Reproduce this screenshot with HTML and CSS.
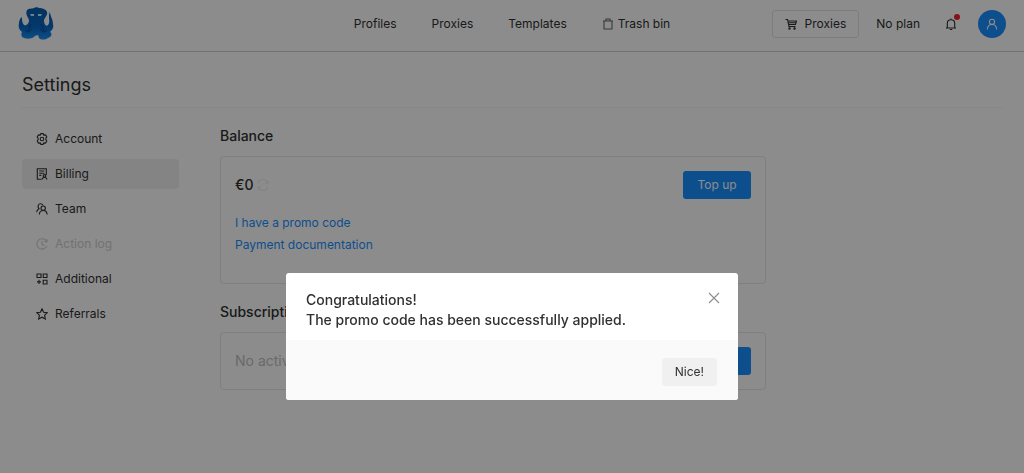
FILE: index.html
```html
<!DOCTYPE html>
<html lang="en">
<head>
    <meta charset="UTF-8">
    <meta name="viewport" content="width=device-width, initial-scale=1.0">
    <title>Settings - Billing</title>
    <link rel="stylesheet" href="styles.css">
</head>
<body>
    <header class="header">
        <a class="logo" href="#" aria-label="Home">
            <svg width="36" height="34" viewBox="0 0 36 34">
                <defs>
                    <linearGradient id="ink" x1="0" y1="0" x2="0" y2="1">
                        <stop offset="0" stop-color="#065cae"/>
                        <stop offset="0.6" stop-color="#0868c4"/>
                        <stop offset="1" stop-color="#1a90f5"/>
                    </linearGradient>
                </defs>
                <path fill="url(#ink)" d="M9 3C11 1 14 2 16 1C17 0 20 0 21 1C24 1 28 2 29 5C30 8 27 10 26 13C26 17 28 20 30 18C32 16 31 13 31 10C31 8 31 6 32 5C32 9 35 12 35 17C36 21 34 23 32 25C35 27 33 30 30 31C27 33 23 33 21 31L20 28C18 29 17 28 16 30C13 32 9 32 6 31C3 30 3 27 4 25C1 23 0 20 1 16C1 14 2 11 4 10C4 13 4 16 6 18C9 19 11 16 11 13C10 10 7 7 9 3Z"/>
                <path stroke="#054a92" stroke-width="1" fill="none" d="M13 17L10 24M23 17L26 24M7 23C9 26 12 25 14 22M29 23C27 26 24 25 22 22"/>
                <path fill="#c4ecff" d="M12 7H16V9H13ZM20 7H24L23 9H20Z"/>
            </svg>
        </a>
        <nav class="nav">
            <a href="#">Profiles</a>
            <a href="#">Proxies</a>
            <a href="#">Templates</a>
            <a href="#">
                <svg class="icon trash" viewBox="0 0 12 12"><path d="M1 3H11M4 3V1H8V3M2 3V11H10V3"/></svg>
                Trash bin
            </a>
        </nav>
        <div class="tools">
            <button class="btn btn-outline">
                <svg class="icon" viewBox="0 0 12 12"><path d="M0.5 1.5H2.5L4 8.5H10.5M3 3H11.5L10.5 6.5H3.6M3.2 4.7H11"/><circle cx="4.5" cy="10.5" r="0.7"/><circle cx="9.5" cy="10.5" r="0.7"/></svg>
                Proxies
            </button>
            <span class="plan">No plan</span>
            <button class="bell" aria-label="Notifications">
                <svg class="icon" viewBox="0 0 12 12"><path d="M1 10H11M2.3 10V5.3C2.3 3 4 1.7 6 1.7S9.7 3 9.7 5.3V10M6 1.7V0.5M4.8 11.5H7.2"/></svg>
                <span class="dot"></span>
            </button>
            <button class="avatar" aria-label="User menu">
                <svg class="icon" viewBox="0 0 12 12"><circle cx="6" cy="3.8" r="2.6"/><path d="M1.3 11.5C1.5 8.5 3.2 6.5 6 6.5S10.5 8.5 10.7 11.5"/></svg>
            </button>
        </div>
    </header>

    <main class="page">
        <h1>Settings</h1>
        <div class="columns">
            <nav class="side">
                <a href="#">
                    <svg class="icon" viewBox="0 0 12 12"><path d="M4.8 0.6H7.2L7.8 2.1L9.5 1.9L10.8 4L9.9 5.2V6.8L10.8 8L9.5 10.1L7.8 9.9L7.2 11.4H4.8L4.2 9.9L2.5 10.1L1.2 8L2.1 6.8V5.2L1.2 4L2.5 1.9L4.2 2.1Z"/><circle cx="6" cy="6" r="1.8"/></svg>
                    Account
                </a>
                <a href="#" class="active">
                    <svg class="icon" viewBox="0 0 12 12"><path d="M5.5 11.3H1.3V0.7H10.3V7M3.3 3H8.3M3.3 5.2H8.3M3.3 7.4H5.3M6.2 11.5C6.4 10 7.2 9.3 8.5 9.3S10.6 10 11 11.5"/><circle cx="8.5" cy="7.9" r="1.3"/></svg>
                    Billing
                </a>
                <a href="#">
                    <svg class="icon" viewBox="0 0 12 12"><path d="M3.3 11.5C3.5 8.8 5 7.5 7.2 7.5S10.9 8.8 11.2 11.5M0.7 9.3C0.8 7.6 1.6 6.3 3 5.7C1.2 4 2 0.8 4.6 0.8C5.8 0.8 6.5 1.3 7 2.2"/><circle cx="7.2" cy="5.2" r="2.2"/></svg>
                    Team
                </a>
                <a href="#" class="disabled" aria-disabled="true">
                    <svg class="icon" viewBox="0 0 12 12"><path d="M10.5 3.2A5.2 5.2 0 1 0 10.8 8M11 1.2V3.8H8.4M6 3V6.3L8.2 7.5"/></svg>
                    Action log
                </a>
                <a href="#">
                    <svg class="icon" viewBox="0 0 12 12"><path d="M1 1H5V4.5H1ZM7.2 1H11V4.5H7.2ZM7.2 7.2H11V11H7.2ZM3 6.8V11M1 8.9H5"/></svg>
                    Additional
                </a>
                <a href="#">
                    <svg class="icon" viewBox="0 0 12 12"><path d="M6 0.8L7.6 4.2L11.3 4.7L8.6 7.2L9.3 11L6 9.2L2.7 11L3.4 7.2L0.7 4.7L4.4 4.2Z"/></svg>
                    Referrals
                </a>
            </nav>

            <div class="content">
                <section>
                    <h2>Balance</h2>
                    <div class="card balance">
                        <div>
                            <p class="amount">€0 <svg class="icon" viewBox="0 0 12 12"><path d="M1 4A5 5 0 0 1 10.5 4M11 1V4.2H8M11 8A5 5 0 0 1 1.5 8M1 11V7.8H4"/></svg></p>
                            <a href="#">I have a promo code</a>
                            <a href="#">Payment documentation</a>
                        </div>
                        <button class="btn btn-primary">Top up</button>
                    </div>
                </section>
                <section>
                    <h2>Subscription</h2>
                    <div class="card">
                        <p class="empty">No active plan</p>
                        <button class="btn btn-primary" aria-label="Choose a plan"></button>
                    </div>
                </section>
            </div>
        </div>
    </main>

    <div class="overlay">
        <div class="modal" role="dialog" aria-modal="true" aria-labelledby="modal-text">
            <div class="modal-body">
                <p id="modal-text">Congratulations!<br>The promo code has been successfully applied.</p>
                <button class="close" aria-label="Close">
                    <svg class="icon" viewBox="0 0 12 12"><path d="M1 1L11 11M11 1L1 11"/></svg>
                </button>
            </div>
            <div class="modal-footer">
                <button class="btn btn-grey">Nice!</button>
            </div>
        </div>
    </div>
</body>
</html>
```
FILE: styles.css
```css
* {
    box-sizing: border-box;
}
body {
    margin: 0;
    background: #fff;
    color: #303030;
    font: 12px/20px Inter, "Liberation Sans", sans-serif;
}
h1, h2, p {
    margin: 0;
    font-weight: 500;
}
a {
    color: inherit;
    text-decoration: none;
}
button {
    font: inherit;
    color: inherit;
    cursor: pointer;
}
.icon {
    width: 12px;
    height: 12px;
    flex: none;
    fill: none;
    stroke: currentColor;
    stroke-width: 1.1;
}

/* header */
.header {
    display: grid;
    grid-template-columns: 1fr auto 1fr;
    align-items: center;
    height: 52px;
    padding: 0 18px 3px;
    border-bottom: 1px solid #d0d0d0;
}
.logo {
    display: flex;
}
.nav {
    display: flex;
    gap: 35px;
}
.nav a {
    display: flex;
    align-items: center;
    gap: 4px;
}
.trash {
    color: #666;
}
.tools {
    display: flex;
    align-items: center;
    justify-content: flex-end;
}
.btn {
    display: flex;
    align-items: center;
    justify-content: center;
    height: 28px;
    padding: 0 12px;
    border: 1px solid transparent;
    border-radius: 3px;
}
.btn-outline {
    gap: 8px;
    background: #fff;
    border-color: #e4e4e4;
}
.btn-primary {
    background: #1890ff;
    color: #fff;
    min-width: 68px;
}
.btn-grey {
    background: #f0f0f0;
}
.plan {
    margin: 0 24px 0 17px;
}
.bell {
    position: relative;
    display: flex;
    padding: 1px;
    border: 0;
    background: none;
    margin-right: 20px;
}
.dot {
    position: absolute;
    top: -3px;
    right: -2px;
    width: 6px;
    height: 6px;
    border-radius: 50%;
    background: #f5222d;
}
.avatar {
    display: flex;
    align-items: center;
    justify-content: center;
    width: 28px;
    height: 28px;
    padding: 0;
    border: 0;
    border-radius: 50%;
    background: #1890ff;
    color: #fff;
}

/* settings page */
.page {
    padding: 20px 22px;
}
h1 {
    padding-bottom: 9px;
    margin-bottom: 16px;
    border-bottom: 1px solid #f4f4f4;
    font-size: 18px;
    font-weight: 400;
    line-height: 26px;
}
.columns {
    display: flex;
    gap: 41px;
}
.side {
    display: flex;
    flex-direction: column;
    gap: 5px;
    width: 157px;
}
.side a {
    display: flex;
    align-items: center;
    gap: 7px;
    height: 30px;
    padding: 0 14px;
    border-radius: 4px;
}
.side .active {
    background: #f0f0f0;
}
.side .disabled {
    color: #cfcfcf;
}
.content {
    flex: 0 1 546px;
    padding-top: 2px;
}
h2 {
    margin-bottom: 10px;
    font-size: 14px;
    line-height: 20px;
}
section + section {
    margin-top: 18px;
}
.card {
    display: flex;
    justify-content: space-between;
    padding: 14px;
    border: 1px solid #e8e8e8;
    border-radius: 4px;
}
.balance {
    min-height: 128px;
}
.balance a {
    display: block;
    color: #1890ff;
    line-height: 22px;
}
.amount {
    margin-bottom: 13px;
    font-size: 14px;
    line-height: 28px;
}
.amount .icon {
    color: #eee;
    vertical-align: -1px;
}
.empty {
    color: #bfbfbf;
    font-size: 14px;
    font-weight: 400;
    line-height: 28px;
}

/* dialog */
.overlay {
    position: fixed;
    inset: 0;
    display: flex;
    align-items: flex-start;
    justify-content: center;
    padding-top: 273px;
    background: rgba(0, 0, 0, 0.45);
}
.modal {
    width: 452px;
    border-radius: 3px;
    overflow: hidden;
    background: #fff;
}
.modal-body {
    display: flex;
    justify-content: space-between;
    align-items: flex-start;
    padding: 17px 18px 10px 20px;
    font-size: 14px;
}
.close {
    display: flex;
    padding: 2px 0;
    border: 0;
    background: none;
    color: #8c8c8c;
}
.modal-footer {
    display: flex;
    justify-content: flex-end;
    padding: 18px 21px 14px;
    background: #fafafa;
}
```
